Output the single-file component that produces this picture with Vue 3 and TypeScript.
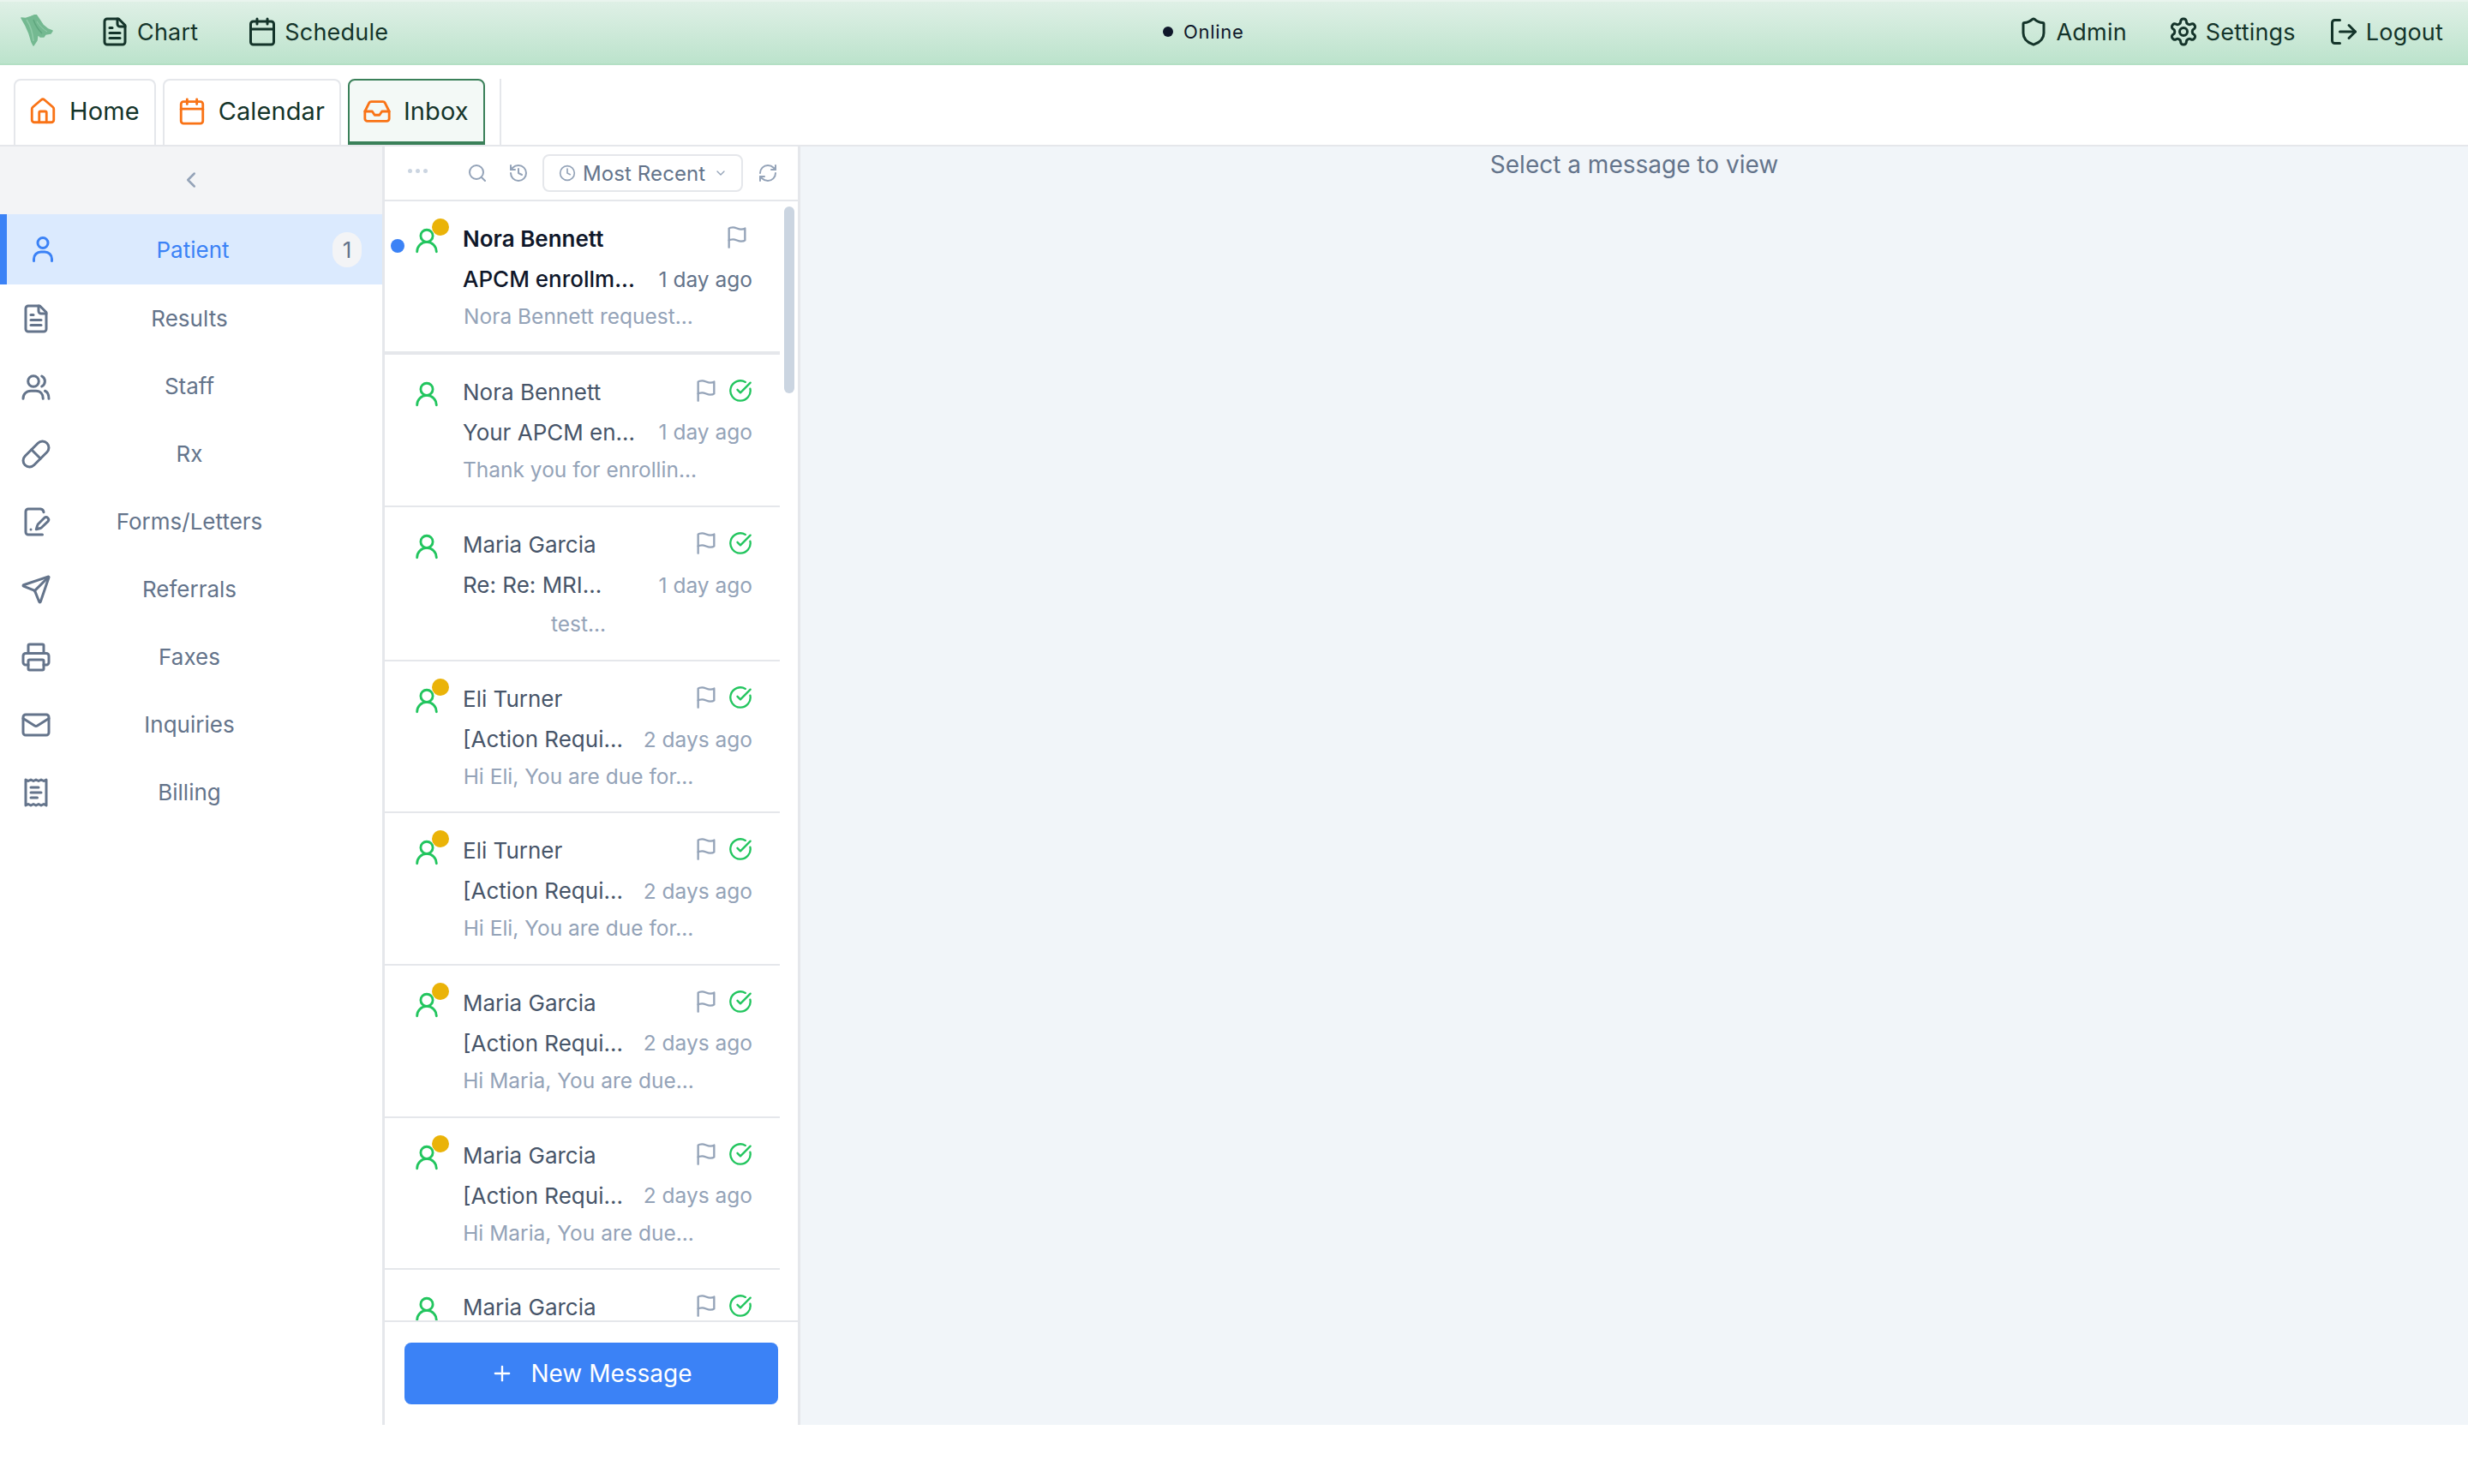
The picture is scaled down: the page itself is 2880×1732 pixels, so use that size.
<script setup lang="ts">
import { h } from 'vue'
import type { FunctionalComponent } from 'vue'

const icons: Record<string, string> = {
  file: '<path d="M15 2H6a2 2 0 0 0-2 2v16a2 2 0 0 0 2 2h12a2 2 0 0 0 2-2V7Z"/><path d="M14 2v4a2 2 0 0 0 2 2h4"/><path d="M10 9H8"/><path d="M16 13H8"/><path d="M16 17H8"/>',
  calendar: '<path d="M8 2v4"/><path d="M16 2v4"/><rect width="18" height="18" x="3" y="4" rx="2"/><path d="M3 10h18"/>',
  shield: '<path d="M20 13c0 5-3.5 7.5-7.66 8.95a1 1 0 0 1-.67-.01C7.5 20.5 4 18 4 13V6a1 1 0 0 1 1-1c2 0 4.5-1.2 6.24-2.72a1.17 1.17 0 0 1 1.52 0C14.51 3.81 17 5 19 5a1 1 0 0 1 1 1z"/>',
  settings: '<path d="M12.22 2h-.44a2 2 0 0 0-2 2v.18a2 2 0 0 1-1 1.73l-.43.25a2 2 0 0 1-2 0l-.15-.08a2 2 0 0 0-2.73.73l-.22.38a2 2 0 0 0 .73 2.73l.15.1a2 2 0 0 1 1 1.72v.51a2 2 0 0 1-1 1.74l-.15.09a2 2 0 0 0-.73 2.73l.22.38a2 2 0 0 0 2.73.73l.15-.08a2 2 0 0 1 2 0l.43.25a2 2 0 0 1 1 1.73V20a2 2 0 0 0 2 2h.44a2 2 0 0 0 2-2v-.18a2 2 0 0 1 1-1.73l.43-.25a2 2 0 0 1 2 0l.15.08a2 2 0 0 0 2.73-.73l.22-.39a2 2 0 0 0-.73-2.73l-.15-.08a2 2 0 0 1-1-1.74v-.5a2 2 0 0 1 1-1.74l.15-.09a2 2 0 0 0 .73-2.73l-.22-.38a2 2 0 0 0-2.73-.73l-.15.08a2 2 0 0 1-2 0l-.43-.25a2 2 0 0 1-1-1.73V4a2 2 0 0 0-2-2z"/><circle cx="12" cy="12" r="3"/>',
  logout: '<path d="M9 21H5a2 2 0 0 1-2-2V5a2 2 0 0 1 2-2h4"/><path d="m16 17 5-5-5-5"/><path d="M21 12H9"/>',
  home: '<path d="M15 21v-8a1 1 0 0 0-1-1h-4a1 1 0 0 0-1 1v8"/><path d="M3 10a2 2 0 0 1 .709-1.528l7-5.999a2 2 0 0 1 2.582 0l7 5.999A2 2 0 0 1 21 10v9a2 2 0 0 1-2 2H5a2 2 0 0 1-2-2z"/>',
  inbox: '<path d="M22 12h-6l-2 3h-4l-2-3H2"/><path d="M5.45 5.11 2 12v6a2 2 0 0 0 2 2h16a2 2 0 0 0 2-2v-6l-3.45-6.89A2 2 0 0 0 16.76 4H7.24a2 2 0 0 0-1.79 1.11z"/>',
  user: '<circle cx="12" cy="8" r="5"/><path d="M20 21a8 8 0 0 0-16 0"/>',
  person: '<circle cx="12" cy="7" r="4"/><path d="M5 21v-1.5A5.5 5.5 0 0 1 10.5 14h3a5.5 5.5 0 0 1 5.5 5.5V21"/>',
  users: '<circle cx="10" cy="8" r="4.2"/><path d="M2 21.5c0-3.5 2.5-6 6-6h4c3.5 0 5.5 2.5 5.5 6"/><path d="M16.5 4a4.5 4.5 0 0 1 0 8"/><path d="M19 15.5c2 .8 3 3 3 6"/>',
  pill: '<path d="m10.5 20.5 10-10a4.95 4.95 0 1 0-7-7l-10 10a4.95 4.95 0 1 0 7 7Z"/><path d="m8.5 8.5 7 7"/>',
  form: '<path d="M18 4.5A3 3 0 0 0 15.5 2H6a2 2 0 0 0-2 2v16a2 2 0 0 0 2 2h11"/><path d="M21.4 11.6a2 2 0 0 0-2.8-2.8l-5 5a2 2 0 0 0-.5.9l-.9 3.2 3.2-.9a2 2 0 0 0 .9-.5z"/><path d="M8 18h.01"/>',
  send: '<path d="M14.536 21.686a.5.5 0 0 0 .937-.024l6.5-19a.496.496 0 0 0-.635-.635l-19 6.5a.5.5 0 0 0-.024.937l7.93 3.18a2 2 0 0 1 1.112 1.11z"/><path d="m21.854 2.147-10.94 10.939"/>',
  printer: '<path d="M6 18H4a2 2 0 0 1-2-2v-5a2 2 0 0 1 2-2h16a2 2 0 0 1 2 2v5a2 2 0 0 1-2 2h-2"/><path d="M6 9V3a1 1 0 0 1 1-1h10a1 1 0 0 1 1 1v6"/><rect x="6" y="14" width="12" height="8" rx="1"/>',
  mail: '<rect width="20" height="16" x="2" y="4" rx="2"/><path d="m22 7-8.97 5.7a1.94 1.94 0 0 1-2.06 0L2 7"/>',
  receipt: '<path d="M4 2v20l2-1 2 1 2-1 2 1 2-1 2 1 2-1 2 1V2l-2 1-2-1-2 1-2-1-2 1-2-1-2 1Z"/><path d="M14 8H8"/><path d="M16 12H8"/><path d="M13 16H8"/>',
  search: '<circle cx="11" cy="11" r="8"/><path d="m21 21-4.3-4.3"/>',
  history: '<path d="M3 12a9 9 0 1 0 9-9 9.75 9.75 0 0 0-6.74 2.74L3 8"/><path d="M3 3v5h5"/><path d="M12 7v5l4 2"/>',
  clock: '<circle cx="12" cy="12" r="10"/><path d="M12 6v6l4 2"/>',
  chevronDown: '<path d="m6 9 6 6 6-6"/>',
  chevronLeft: '<path d="m15 18-6-6 6-6"/>',
  refresh: '<path d="M3 12a9 9 0 0 1 9-9 9.75 9.75 0 0 1 6.74 2.74L21 8"/><path d="M21 3v5h-5"/><path d="M21 12a9 9 0 0 1-9 9 9.75 9.75 0 0 1-6.74-2.74L3 16"/><path d="M8 16H3v5"/>',
  flag: '<path d="M4 15s1-1 4-1 5 2 8 2 4-1 4-1V3s-1 1-4 1-5-2-8-2-4 1-4 1z"/><path d="M4 22v-7"/>',
  check: '<path d="M21.801 10A10 10 0 1 1 17 3.335"/><path d="m9 11 3 3L22 4"/>',
  plus: '<path d="M5 12h14"/><path d="M12 5v14"/>',
}

const Icon: FunctionalComponent<{ name: string }> = (props) =>
  h('svg', {
    viewBox: '0 0 24 24',
    fill: 'none',
    stroke: 'currentColor',
    'stroke-width': 2,
    'stroke-linecap': 'round',
    'stroke-linejoin': 'round',
    innerHTML: icons[props.name],
  })
Icon.props = ['name']

const sideItems = [
  { label: 'Patient', icon: 'person', count: 1 },
  { label: 'Results', icon: 'file' },
  { label: 'Staff', icon: 'users' },
  { label: 'Rx', icon: 'pill' },
  { label: 'Forms/Letters', icon: 'form' },
  { label: 'Referrals', icon: 'send' },
  { label: 'Faxes', icon: 'printer' },
  { label: 'Inquiries', icon: 'mail' },
  { label: 'Billing', icon: 'receipt' },
]

const messages = [
  { name: 'Nora Bennett', subject: 'APCM enrollm...', time: '1 day ago', preview: 'Nora Bennett request...', unread: true, pending: true, done: false },
  { name: 'Nora Bennett', subject: 'Your APCM en...', time: '1 day ago', preview: 'Thank you for enrollin...', unread: false, pending: false, done: true },
  { name: 'Maria Garcia', subject: 'Re: Re: MRI...', time: '1 day ago', preview: 'test...', unread: false, pending: false, done: true },
  { name: 'Eli Turner', subject: '[Action Requi...', time: '2 days ago', preview: 'Hi Eli, You are due for...', unread: false, pending: true, done: true },
  { name: 'Eli Turner', subject: '[Action Requi...', time: '2 days ago', preview: 'Hi Eli, You are due for...', unread: false, pending: true, done: true },
  { name: 'Maria Garcia', subject: '[Action Requi...', time: '2 days ago', preview: 'Hi Maria, You are due...', unread: false, pending: true, done: true },
  { name: 'Maria Garcia', subject: '[Action Requi...', time: '2 days ago', preview: 'Hi Maria, You are due...', unread: false, pending: true, done: true },
  // last row is cut off by the composer, only its first line shows
  { name: 'Maria Garcia', subject: '', time: '', preview: '', unread: false, pending: false, done: true },
]
</script>

<template>
  <div class="app">
    <header class="topbar">
      <div class="top-left">
        <svg class="logo" viewBox="0 0 40 40">
          <path d="M1 4 L6 4.5 L12 2.5 L18 0 L22 6 L26 12 L32 17 L37 19 L35 22 L29 23 L27 26 L23 26 L20 23 L19 30 L15 36 L13 32 L10 22 L6 13 Z" fill="#74b991" stroke="#74b991" stroke-width="1.5" stroke-linejoin="round" />
          <path d="M7 6 C11 12 14 20 15 31" fill="none" stroke="#8fcba8" stroke-width="1.5" />
          <path d="M15 6 C17 12 20 17 25 22" fill="none" stroke="#5fa67e" stroke-width="1.5" />
          <path d="M19 8 C22 13 26 17 31 20" fill="none" stroke="#93cdab" stroke-width="1" />
        </svg>
        <div class="top-group">
          <a class="top-link"><Icon name="file" class="ico" /><span>Chart</span></a>
          <a class="top-link"><Icon name="calendar" class="ico" /><span>Schedule</span></a>
        </div>
      </div>
      <div class="online"><i class="online-dot"></i><span>Online</span></div>
      <div class="top-group right">
        <a class="top-link"><Icon name="shield" class="ico" /><span>Admin</span></a>
        <a class="top-link"><Icon name="settings" class="ico" /><span>Settings</span></a>
        <a class="top-link"><Icon name="logout" class="ico" /><span>Logout</span></a>
      </div>
    </header>

    <nav class="tabs">
      <a class="tab"><Icon name="home" class="ico" /><span>Home</span></a>
      <a class="tab"><Icon name="calendar" class="ico" /><span>Calendar</span></a>
      <a class="tab active"><Icon name="inbox" class="ico" /><span>Inbox</span></a>
      <div class="tab-rule"></div>
    </nav>

    <div class="body">
      <aside class="sidebar">
        <div class="collapse"><Icon name="chevronLeft" class="chev" /></div>
        <a v-for="item in sideItems" :key="item.label" class="side-item" :class="{ active: item.count }">
          <Icon :name="item.icon" class="ico" />
          <span class="side-label">{{ item.label }}</span>
          <b v-if="item.count" class="badge">{{ item.count }}</b>
        </a>
      </aside>

      <section class="list">
        <div class="toolbar">
          <span class="dots"><i></i><i></i><i></i></span>
          <Icon name="search" class="tool search" />
          <Icon name="history" class="tool history" />
          <div class="sort">
            <Icon name="clock" class="sort-clock" />
            <span>Most Recent</span>
            <Icon name="chevronDown" class="sort-chev" />
          </div>
          <Icon name="refresh" class="tool refresh" />
        </div>

        <div class="scroller">
          <div class="rows">
            <article v-for="(m, i) in messages" :key="i" class="row" :class="{ unread: m.unread }">
              <div class="row-side">
                <i class="blue-dot" :class="{ on: m.unread }"></i>
                <span class="avatar">
                  <Icon name="user" class="green-user" />
                  <i v-if="m.pending" class="amber-dot"></i>
                </span>
              </div>
              <div class="row-main">
                <div class="row-line">
                  <span class="name">{{ m.name }}</span>
                  <span class="marks">
                    <Icon name="flag" class="flag" />
                    <Icon v-if="m.done" name="check" class="done" />
                  </span>
                </div>
                <div v-if="m.subject" class="row-line">
                  <span class="subject">{{ m.subject }}</span>
                  <span class="time">{{ m.time }}</span>
                </div>
                <div v-if="m.preview" class="preview">{{ m.preview }}</div>
              </div>
            </article>
          </div>
          <div class="thumb"></div>
        </div>

        <div class="composer">
          <button class="new-btn" type="button"><Icon name="plus" class="plus" /><span>New Message</span></button>
        </div>
      </section>

      <main class="detail">Select a message to view</main>
    </div>
  </div>
</template>

<style>
html,
body {
  margin: 0;
  background: #fff;
}
</style>

<style scoped>
.app {
  width: 2880px;
  height: 1732px;
  display: flex;
  flex-direction: column;
  font-family: Inter, 'Liberation Sans', sans-serif;
  color: #64748b;
}

.topbar {
  height: 76px;
  box-sizing: border-box;
  flex: none;
  display: flex;
  align-items: center;
  justify-content: space-between;
  padding: 0 29px 2px 24px;
  background: linear-gradient(#dff0e6, #bce3cc);
  border-top: 2px solid #e9f4ee;
  border-bottom: 2px solid #b3dfc4;
  color: #14342a;
}

.top-left {
  display: flex;
  align-items: center;
}

.top-group {
  display: flex;
  align-items: center;
  gap: 57px;
}

.top-group.right {
  gap: 38px;
}

.top-group.right .top-link:first-child {
  margin-right: 10px;
}

.logo {
  width: 40px;
  height: 40px;
  margin-right: 52px;
}

.top-link {
  display: flex;
  align-items: center;
  gap: 8px;
  font-size: 27px;
  letter-spacing: 0.2px;
}

.ico {
  width: 36px;
  height: 36px;
  flex: none;
}

.online {
  display: flex;
  align-items: center;
  gap: 12px;
  font-size: 22px;
  letter-spacing: 0.7px;
  color: #0f172a;
}

.online-dot {
  width: 12px;
  height: 12px;
  border-radius: 50%;
  background: #0f172a;
}

.tabs {
  height: 93px;
  flex: none;
  display: flex;
  align-items: flex-end;
  gap: 8px;
  padding-left: 16px;
  border-bottom: 2px solid #e5e7eb;
}

.tab {
  height: 77px;
  box-sizing: border-box;
  display: flex;
  align-items: center;
  gap: 14px;
  padding: 0 17px 4px 15px;
  border: 2px solid #e5e7eb;
  border-bottom: 0;
  border-radius: 8px 8px 0 0;
  font-size: 29px;
  letter-spacing: 0.1px;
  color: #14342a;
}

.tab .ico {
  width: 34px;
  height: 34px;
  color: #f97316;
}

.tab.active {
  padding-bottom: 0;
  background: #f3f9f6;
  border: 2px solid #3a8059;
  border-bottom-width: 4px;
}

.tab-rule {
  width: 2px;
  height: 77px;
  margin-left: 9px;
  background: #e5e7eb;
}

.body {
  height: 1492px;
  flex: none;
  display: flex;
}

.sidebar {
  width: 449px;
  box-sizing: border-box;
  flex: none;
  border-right: 3px solid #e5e7eb;
}

.collapse {
  height: 79px;
  box-sizing: border-box;
  padding-bottom: 2px;
  display: flex;
  align-items: center;
  justify-content: center;
  background: #f3f4f6;
  color: #94a3b8;
}

.chev {
  width: 30px;
  height: 30px;
}

.side-item {
  height: 79px;
  box-sizing: border-box;
  display: grid;
  grid-template-columns: 36px 1fr 40px;
  align-items: center;
  padding: 0 24px;
  font-size: 26px;
  color: #64748b;
}

.side-item.active {
  height: 82px;
  background: #dbeafe;
  border-left: 8px solid #3b82f6;
  color: #3b82f6;
}

.side-label {
  text-align: center;
}

.badge {
  justify-self: end;
  width: 34px;
  height: 41px;
  display: flex;
  align-items: center;
  justify-content: center;
  border-radius: 17px;
  background: #f3f4f6;
  color: #64748b;
  font-weight: 400;
}

.list {
  width: 485px;
  box-sizing: border-box;
  flex: none;
  display: flex;
  flex-direction: column;
  border-right: 3px solid #e5e7eb;
}

.toolbar {
  height: 64px;
  box-sizing: border-box;
  flex: none;
  display: flex;
  align-items: center;
  border-bottom: 2px solid #e5e7eb;
  color: #94a3b8;
}

.dots {
  display: flex;
  gap: 4px;
  margin: -6px 0 0 27px;
}

.dots i {
  width: 5px;
  height: 5px;
  border-radius: 50%;
  background: #cbd5e1;
}

.tool {
  width: 24px;
  height: 24px;
  flex: none;
}

.search {
  margin-left: 46px;
}

.history {
  margin-left: 24px;
}

.sort {
  width: 234px;
  height: 44px;
  box-sizing: border-box;
  margin-left: 16px;
  display: flex;
  align-items: center;
  padding-left: 17px;
  border: 2px solid #e5e7eb;
  border-radius: 8px;
  font-size: 24px;
  letter-spacing: 0.1px;
  color: #64748b;
}

.sort-clock {
  width: 20px;
  height: 20px;
  margin-right: 8px;
  color: #94a3b8;
}

.sort-chev {
  width: 16px;
  height: 16px;
  margin-left: 10px;
  color: #94a3b8;
}

.refresh {
  margin-left: 17px;
}

.scroller {
  flex: 1;
  min-height: 0;
  position: relative;
  overflow: hidden;
}

.rows {
  width: 461px;
}

.row {
  height: 177.6px;
  box-sizing: border-box;
  display: flex;
  border-bottom: 2px solid #e5e7eb;
  padding-top: 29px;
}

.row:nth-child(-n + 2) {
  height: 178.6px;
}

.row:nth-child(3) {
  height: 180px;
}

.row:nth-child(3) .preview {
  margin-top: 2px;
}

.row:nth-child(4) {
  height: 177px;
}

.row:nth-child(6) {
  height: 178px;
}

.row:nth-child(7) {
  height: 177.2px;
}

.row.unread {
  border-bottom-width: 4px;
}

.row-side {
  width: 91px;
  flex: none;
  display: flex;
  padding-left: 7px;
  box-sizing: border-box;
}

.blue-dot {
  width: 16px;
  height: 16px;
  margin-top: 15px;
  flex: none;
  border-radius: 50%;
}

.blue-dot.on {
  background: #3b82f6;
}

.avatar {
  position: relative;
  width: 34px;
  height: 34px;
  margin-left: 9px;
  color: #22c55e;
}

.green-user {
  display: block;
  width: 34px;
  height: 34px;
}

.amber-dot {
  position: absolute;
  top: -9px;
  right: -9px;
  width: 20px;
  height: 20px;
  border-radius: 50%;
  background: #eab308;
}

.row-main {
  width: 338px;
  flex: none;
  margin-top: -9px;
}

.row-line {
  display: flex;
  align-items: center;
  justify-content: space-between;
  height: 47px;
}

.name {
  font-size: 26px;
  color: #475569;
}

.marks {
  display: flex;
  align-items: center;
  gap: 12px;
  margin-top: -3px;
}

.row.unread .marks {
  margin-right: 4px;
}

.flag {
  width: 28px;
  height: 28px;
  color: #94a3b8;
}

.done {
  width: 28px;
  height: 28px;
  color: #22c55e;
}

.subject {
  font-size: 26px;
  color: #475569;
}

.time {
  font-size: 24.5px;
  color: #94a3b8;
}

.row.unread .time {
  color: #64748b;
}

.row.unread .name {
  color: #0f172a;
  font-weight: 600;
}

.row.unread .subject {
  color: #0f172a;
  font-weight: 500;
}

.preview {
  width: 270px;
  text-align: center;
  font-size: 24.5px;
  line-height: 40px;
  white-space: nowrap;
  color: #94a3b8;
}

.thumb {
  position: absolute;
  top: 6px;
  right: 4px;
  width: 12px;
  height: 218px;
  border-radius: 6px;
  background: #cbd5e1;
}

.composer {
  flex: none;
  height: 122px;
  box-sizing: border-box;
  padding: 24px 0 0 23px;
  border-top: 2px solid #e5e7eb;
}

.new-btn {
  width: 436px;
  height: 72px;
  display: flex;
  align-items: center;
  justify-content: center;
  gap: 19px;
  border: 0;
  border-radius: 8px;
  background: #3b82f6;
  color: #fff;
  font-family: inherit;
  font-size: 28px;
}

.plus {
  width: 28px;
  height: 28px;
}

.detail {
  flex: 1;
  background: #f1f5f9;
  text-align: center;
  font-size: 28px;
  line-height: 24px;
  padding-top: 9px;
  color: #64748b;
}
</style>
